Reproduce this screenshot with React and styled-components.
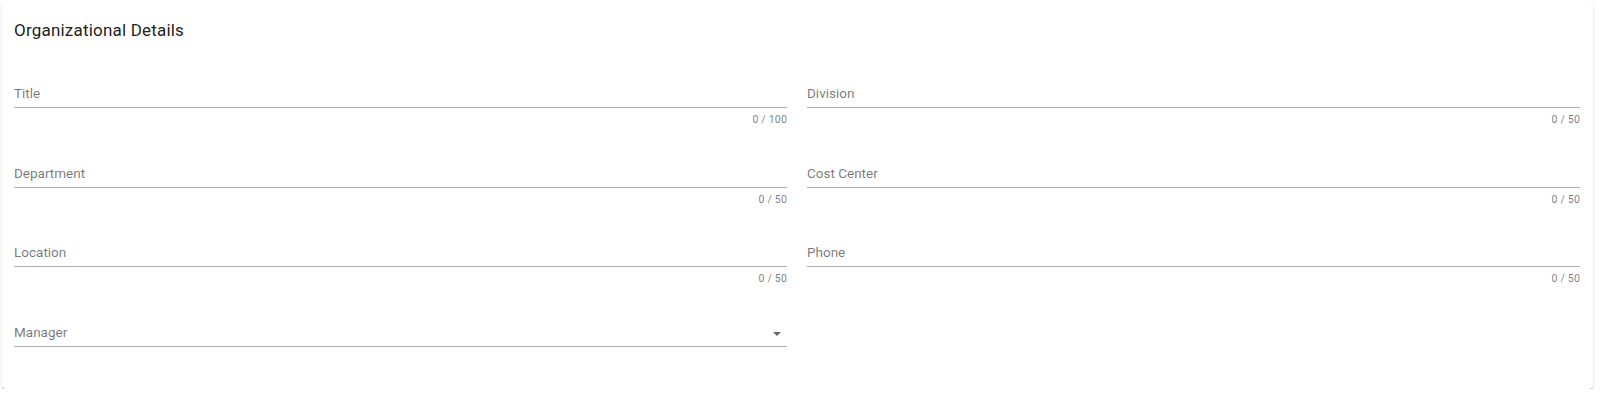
import React from "react";
import styled, { createGlobalStyle } from "styled-components";

const GlobalStyle = createGlobalStyle`
  body {
    margin: 0;
    background: #fff;
    font-family: Roboto, "Liberation Sans", sans-serif;
  }
`;

const Page = styled.div`
  padding: 2px 7px 0 2px;
`;

const Card = styled.div`
  background: #fff;
  border-radius: 4px;
  box-shadow: 0 2px 1px -1px rgba(0, 0, 0, 0.22), 0 1px 1px 0 rgba(0, 0, 0, 0.16),
    0 1px 3px 0 rgba(0, 0, 0, 0.12);
  padding: 16px 13px 24px 12px;
`;

const Heading = styled.h2`
  margin: 0 0 35px;
  font-size: 17px;
  line-height: 24px;
  font-weight: 400;
  color: rgba(0, 0, 0, 0.9);
  letter-spacing: 0.2px;
`;

const Grid = styled.div`
  display: grid;
  grid-template-columns: 1fr 1fr;
  column-gap: 20px;
  row-gap: 30.67px;
`;

const Field = styled.div`
  display: flex;
  flex-direction: column;
`;

const InputBox = styled.div`
  height: 30px;
  display: flex;
  align-items: flex-start;
  border-bottom: 1px solid rgba(0, 0, 0, 0.32);
`;

const Label = styled.span`
  flex: 1;
  padding-top: 4px;
  font-size: 13.5px;
  line-height: 24px;
  color: rgba(0, 0, 0, 0.54);
`;

const Arrow = styled.span`
  width: 0;
  height: 0;
  margin: 16px 6px 0 0;
  border-left: 4px solid transparent;
  border-right: 4px solid transparent;
  border-top: 4px solid rgba(0, 0, 0, 0.6);
`;

const Helper = styled.div`
  margin-top: 5px;
  height: 13px;
  font-size: 10.5px;
  line-height: 14px;
  letter-spacing: 0.2px;
  text-align: right;
  color: rgba(0, 0, 0, 0.54);
`;

const fields = [
  { label: "Title", max: 100 },
  { label: "Division", max: 50 },
  { label: "Department", max: 50 },
  { label: "Cost Center", max: 50 },
  { label: "Location", max: 50 },
  { label: "Phone", max: 50 },
  { label: "Manager", select: true },
];

export default function App() {
  return (
    <>
      <GlobalStyle />
      <Page>
        <Card>
          <Heading>Organizational Details</Heading>
          <Grid>
            {fields.map((f) => (
              <Field key={f.label}>
                <InputBox>
                  <Label>{f.label}</Label>
                  {f.select && <Arrow />}
                </InputBox>
                <Helper>{f.select ? "" : `0 / ${f.max}`}</Helper>
              </Field>
            ))}
          </Grid>
        </Card>
      </Page>
    </>
  );
}
